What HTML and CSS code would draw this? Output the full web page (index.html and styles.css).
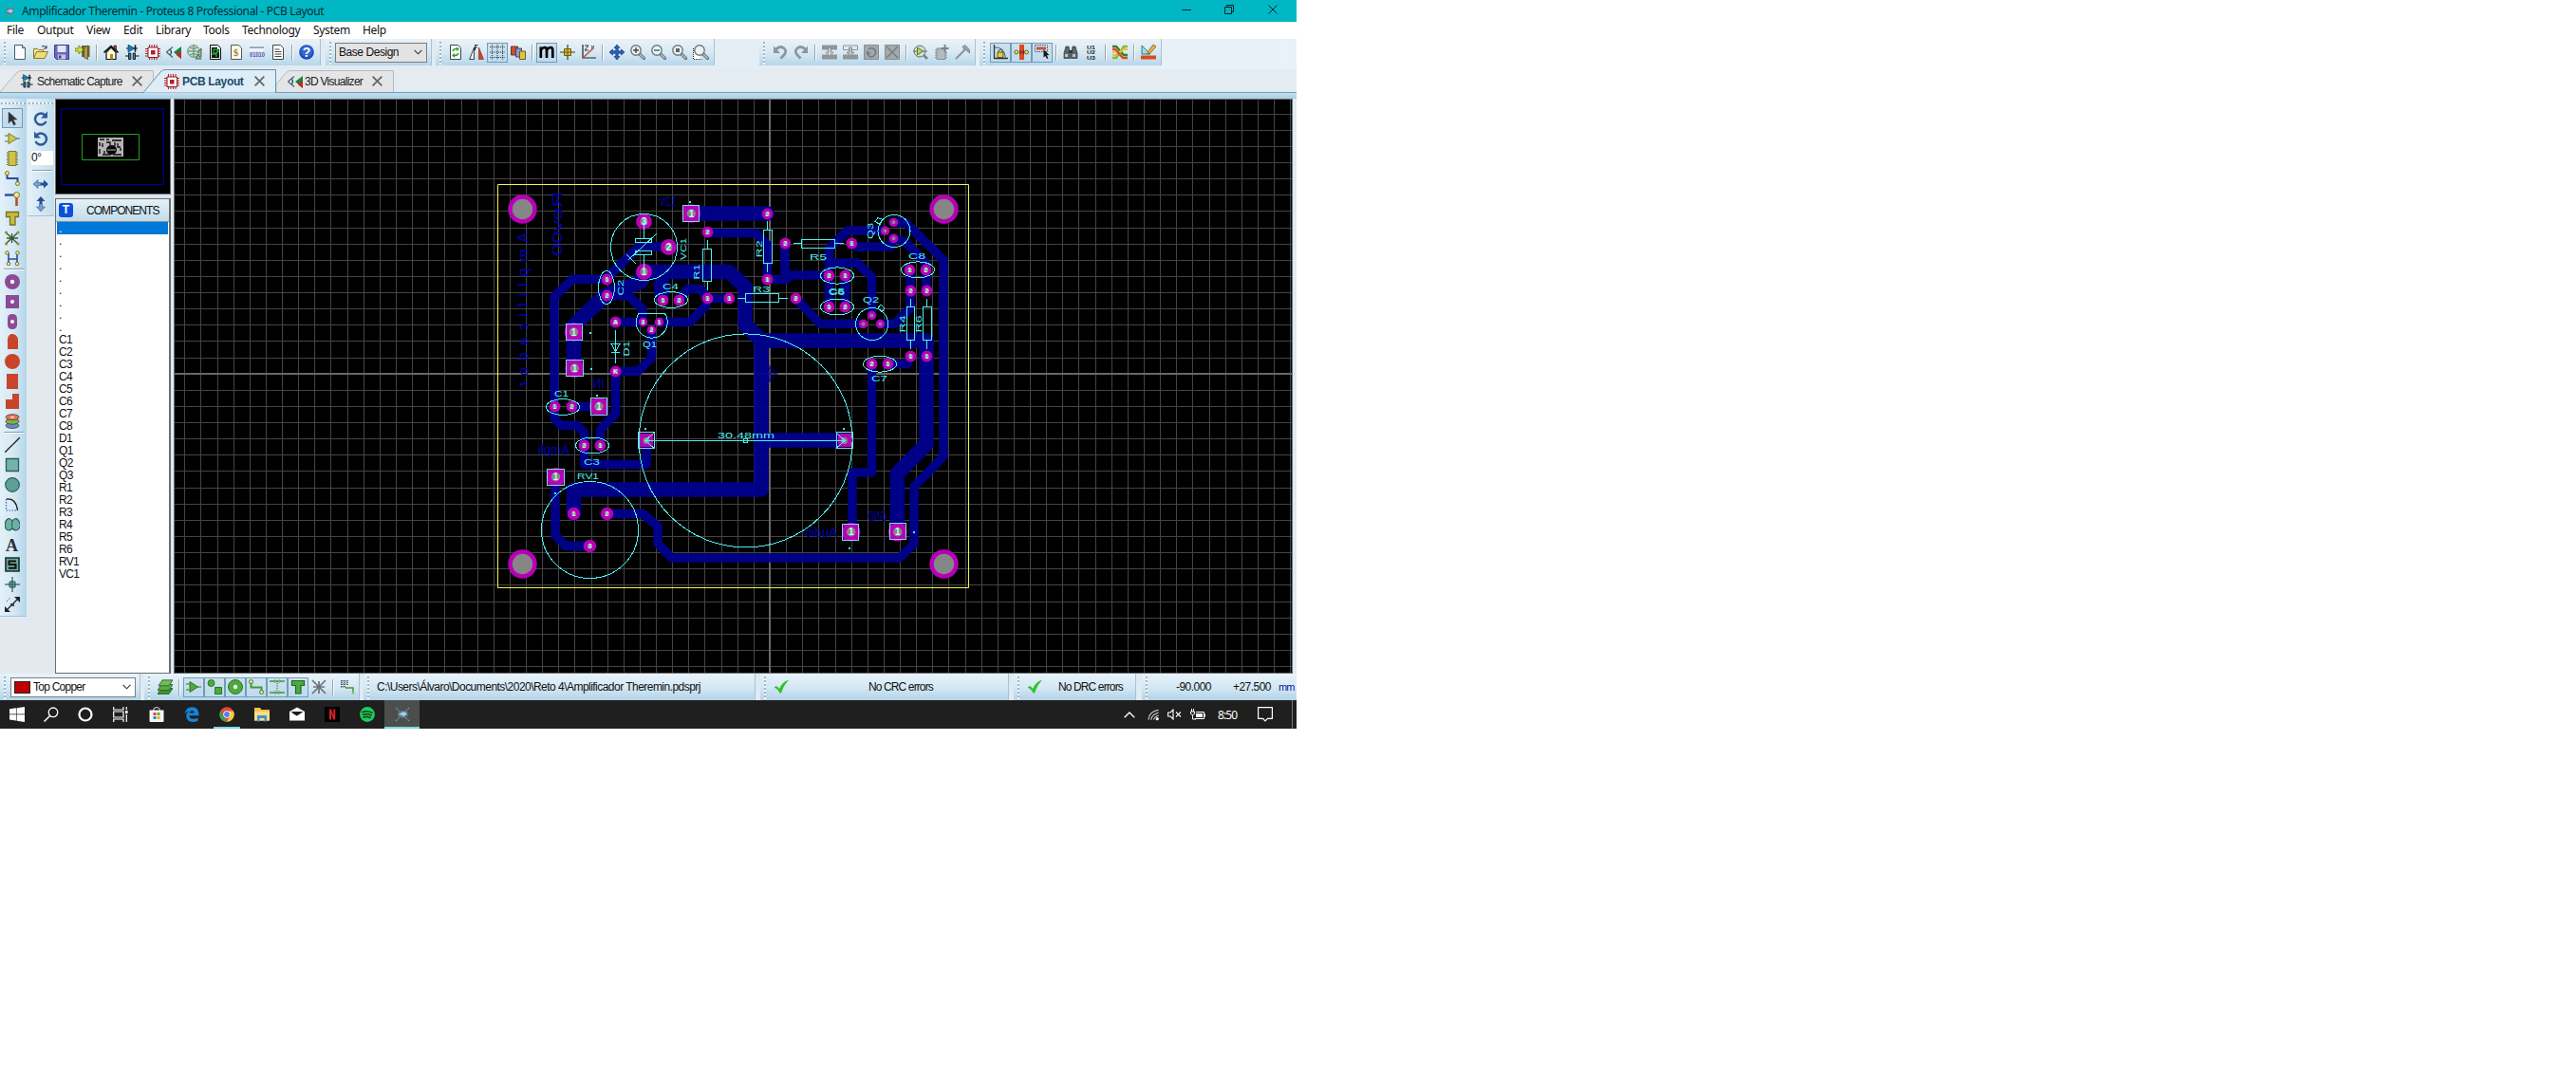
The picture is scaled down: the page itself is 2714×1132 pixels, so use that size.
FILE: index.html
```html
<!DOCTYPE html>
<html lang="en">
<head>
<meta charset="utf-8">
<title>Amplificador Theremin - Proteus 8 Professional - PCB Layout</title>
<link rel="stylesheet" href="styles.css">
</head>
<body>
<svg class="defs" width="0" height="0">
<defs>
<symbol id="proteus" viewBox="0 0 16 16"><path d="M1 1l4 4M15 1l-4 4M1 15l4-4M15 15l-4-4" stroke="#7d8a80" stroke-width="1.4" stroke-dasharray="2 1"/><path d="M4 5l4-1 5 1 1 4-4 3-5-1-2-2z" fill="#4e7f9b"/><path d="M4 8l5-3 4 2-3 3z" fill="#a9cbdc"/></symbol>
<symbol id="new" viewBox="0 0 16 16"><path d="M2.500 .5h8l3 3v12h-11z" fill="#fbfcfd" stroke="#4d5a63"/><path d="M10.500 .5v3h3" fill="#cdd6dd" stroke="#4d5a63"/></symbol>
<symbol id="open" viewBox="0 0 16 16"><path d="M.5 14.500v-10h4l1 1h5v2" fill="#f5e9a0" stroke="#8a7a2c"/><path d="M.5 14.500l3-7h12l-3.500 7z" fill="#f0dc78" stroke="#8a7a2c"/><path d="M9 2q3-2 5 1.500m0-2.500v3h-3" fill="none" stroke="#333"/></symbol>
<symbol id="save" viewBox="0 0 16 16"><path d="M.5.5h15v15h-13l-2-2z" fill="#6c68bd" stroke="#403d85"/><path d="M3.500 1h9v7h-9z" fill="#e3e6f3"/><path d="M4 10.500h8v5H4z" fill="#c5c8d5"/><path d="M5 11.500h2.500v3H5z" fill="#403d85"/></symbol>
<symbol id="door" viewBox="0 0 16 16"><path d="M7 1h8.500v12H7z" fill="#6f6433"/><path d="M9.500 3l4-2v14.500l-4-2z" fill="#a89a55" stroke="#4c4420" stroke-width=".7"/><path d="M0 4h4V1l5 4.500-5 4.500V7H0z" fill="#d2e036" stroke="#6d7820" stroke-width=".8"/></symbol>
<symbol id="home" viewBox="0 0 16 16"><path d="M11 1h2.500v5L11 4z" fill="#b04020" stroke="#111" stroke-width=".6"/><path d="M3 8v7.500h10V8L8 3z" fill="#fffbd8" stroke="#111" stroke-width="1.200"/><path d="M.5 8.500L8 1.500l7.500 7" fill="none" stroke="#111" stroke-width="1.600"/><path d="M7 10h3v5.500H7z" fill="#b8862b"/></symbol>
<symbol id="schem" viewBox="0 0 16 16"><path d="M2 4h12M1 12h3.500M11.500 12h4" stroke="#111" stroke-width="1.200"/><path d="M4 0l7 4L4 8z" fill="#1a7cb8" stroke="#0d2f45" stroke-width=".6"/><path d="M11.500 .3v7.500" stroke="#111" stroke-width="1.500"/><path d="M4.500 9h2.300v6.500H4.500zM9.200 9h2.300v6.500H9.200z" fill="#2c86bd" stroke="#111" stroke-width=".9"/></symbol>
<symbol id="chip" viewBox="0 0 16 16"><path d="M4.500 0v16M7 0v16M9.500 0v16M12 0v16M0 4.500h16M0 7h16M0 9.500h16M0 12h16" stroke="#c01824" stroke-width="1"/><path d="M3 3h10.500v10.500H3z" fill="#fff" stroke="#8c1820"/><path d="M6 6h4.500v4.500H6z" fill="#c01824"/></symbol>
<symbol id="view3d" viewBox="0 0 16 16"><path d="M7 2.500L.5 8 7 13.500" fill="none" stroke="#53666f" stroke-width="1.300"/><path d="M4.500 5q2.500 3 0 6" fill="#2b87a8" stroke="#1b4a5c"/><path d="M8 8l8-6v13z" fill="#178338"/><path d="M12.500 8h3.500v7l-5-3.700z" fill="#c32b25"/></symbol>
<symbol id="globe" viewBox="0 0 16 16"><circle cx="7" cy="7" r="6.300" fill="#c9dfd0" stroke="#5c8b6c"/><path d="M1 7h12M7 1v12M3 3q4 3 8 0M3 11q4-3 8 0" fill="none" stroke="#5c8b6c"/><path d="M11 9l4-5v9M9 15l3-5 3 5z" fill="#9bb3a0" stroke="#4b6655"/></symbol>
<symbol id="gerber" viewBox="0 0 16 16"><path d="M2.500 .5h8l3 3v12h-11z" fill="#eee" stroke="#111"/><path d="M4 3h6v2h2v9H4z" fill="#071408"/><path d="M6 5h4v4H6zM4 10h5v3M10 7h2" fill="none" stroke="#28d858"/></symbol>
<symbol id="dollar" viewBox="0 0 16 16"><path d="M2.500 .5h8l3 3v12h-11z" fill="#fbf8e6" stroke="#555"/><text x="5" y="12" class="ic-dollar">$</text></symbol>
<symbol id="bom" viewBox="0 0 16 16"><path d="M0 1h15v6H0z" fill="#eef3f8"/><path d="M0 3h15" stroke="#4e5c9b"/><text x="0" y="12.500" class="ic-bom" textLength="16" lengthAdjust="spacingAndGlyphs">01010</text></symbol>
<symbol id="doc" viewBox="0 0 16 16"><path d="M2.500 .5h8l3 3v12h-11z" fill="#fff" stroke="#444"/><path d="M4.500 5h5M4.500 7.500h7M4.500 10h7M4.500 12.500h7" stroke="#444"/></symbol>
<symbol id="help" viewBox="0 0 16 16"><circle cx="8" cy="8" r="7.800" fill="#1d4fb8"/><circle cx="8" cy="7" r="6" fill="#3269d0"/><text x="3.800" y="13" class="ic-help">?</text></symbol>
<symbol id="refresh" viewBox="0 0 16 16"><path d="M2.500 .5h8l3 3v12h-11z" fill="#fff" stroke="#444"/><path d="M5 7q1-3 5-2.500M11 9q-1 3-5 2.500" fill="none" stroke="#2aa02a" stroke-width="1.600"/><path d="M9 2.500l3 2-3 2.500zM7 9l-3 2.300L7 14z" fill="#2aa02a"/></symbol>
<symbol id="flip" viewBox="0 0 16 16"><path d="M5.500 3v12.500H.7z" fill="#e5ecf1" stroke="#333" stroke-width=".9"/><path d="M10.500 3v12.500h5z" fill="#d0432b" stroke="#7b2315" stroke-width=".6"/><path d="M6.500 6V.5h3M6.500 3h2.500" fill="none" stroke="#222"/></symbol>
<symbol id="grid" viewBox="0 0 16 16"><path d="M0 2.500h16M0 8h16M0 13.500h16M2.500 0v16M8 0v16M13.500 0v16" stroke="#34444e" stroke-width="1.100" stroke-dasharray="1.200 1"/></symbol>
<symbol id="layers3" viewBox="0 0 16 16"><path d="M.5 2h7v9h-7z" fill="#cf4b2b" stroke="#68362c"/><path d="M5.500 4h6v9h-6z" fill="#8c9bd8" stroke="#3a416d"/><path d="M9.500 7h6v8.500h-6z" fill="#e6c53d" stroke="#6c5d1c"/></symbol>
<symbol id="metric" viewBox="0 0 16 16"><path d="M1.800 14V2.500M2 5.500q1.500-2.500 3.800-2.500 2.200 0 2.200 3v8M8.200 5.500q1.500-2.500 3.800-2.500 2.300 0 2.300 3v8" fill="none" stroke="#000" stroke-width="2.700"/></symbol>
<symbol id="origin" viewBox="0 0 16 16"><path d="M8 0v16M0 8h16" stroke="#443f10" stroke-width="1.200"/><path d="M4.500 4.500h7v7h-7z" fill="#d3bd2e" stroke="#6a5e10"/><path d="M8 5v6M5 8h6" stroke="#6a5e10"/></symbol>
<symbol id="polar" viewBox="0 0 16 16"><path d="M2 0v14h14" fill="none" stroke="#222" stroke-width="1.200"/><path d="M2 14L13 4" stroke="#d04030" stroke-width="1.300"/><path d="M4 1h4L4 6h4M11 1l3 3M14 1l-3 3" fill="none" stroke="#333" stroke-width="1"/></symbol>
<symbol id="pan" viewBox="0 0 16 16"><path d="M8 0l3 3.500H9.200v3.300h3.300V5L16 8l-3.500 3V9.200H9.200v3.300H11L8 16l-3-3.500h1.800V9.200H3.500V11L0 8l3.500-3v1.800h3.300V3.500H5z" fill="#2763b7" stroke="#143a78" stroke-width=".7"/></symbol>
<symbol id="mag" viewBox="0 0 16 16"><path d="M10 10l4.500 4.500" stroke="#6b7379" stroke-width="3.200" stroke-linecap="round"/><path d="M10 10l4.500 4.500" stroke="#c0c6ca" stroke-width="1.300"/><circle cx="6" cy="6" r="5.200" fill="#eef4f6" stroke="#6f777c" stroke-width="1.400"/></symbol>
<symbol id="undo" viewBox="0 0 16 16"><path d="M3.500 5q4-4 8-1.500 4.500 3.500 0 8l-3 3" fill="none" stroke="#8d969c" stroke-width="2.800"/><path d="M1 1.500v7.500h7z" fill="#8d969c"/></symbol>
<symbol id="block" viewBox="0 0 16 16"><path d="M0 .5h16v5H0zM0 10.500h16v5H0z" fill="#8f9599"/><path d="M6.500 3h3v5H12l-4 4.500L4 8h2.500z" fill="#c8ccce" stroke="#777" stroke-width=".7"/></symbol>
<symbol id="block2" viewBox="0 0 16 16"><path d="M.5 1h15v4.500H.5z" fill="#e3e9ed" stroke="#8f9599"/><path d="M0 10.500h16v5H0z" fill="#8f9599"/><path d="M6.500 3h3v5H12l-4 4.500L4 8h2.500z" fill="#b7bdc1" stroke="#777" stroke-width=".7"/></symbol>
<symbol id="rotblk" viewBox="0 0 16 16"><path d="M.5.5h15v15H.5z" fill="#a3a8ab" stroke="#888e92"/><path d="M5 5a4.500 4.500 0 1 1-1 5" fill="none" stroke="#72797e" stroke-width="1.500"/><path d="M3 6v4h5z" fill="#72797e"/></symbol>
<symbol id="delblk" viewBox="0 0 16 16"><path d="M.5.5h15v15H.5z" fill="#a3a8ab" stroke="#888e92"/><path d="M2 2l12 12M14 2L2 14" stroke="#727b80" stroke-width="1.300"/></symbol>
<symbol id="pick" viewBox="0 0 16 16"><path d="M10 10l5 5" stroke="#7a858a" stroke-width="2.600"/><circle cx="7" cy="7" r="6" fill="#d5e0d8" stroke="#62716a"/><path d="M4.500 3l6 4-6 4z" fill="#b9d34e" stroke="#63752a"/><path d="M0 7h4M10 7h5" stroke="#62716a"/></symbol>
<symbol id="make" viewBox="0 0 16 16"><path d="M3 4h9v11.500H3z" fill="#b5babd" stroke="#868d91"/><path d="M1 6h2M1 8.500h2M1 11h2M1 13.500h2M12 8.500h2M12 11h2M12 13.500h2" stroke="#868d91"/><path d="M11.500 0v8M7.500 4h8" stroke="#7b8387" stroke-width="2"/></symbol>
<symbol id="hammer" viewBox="0 0 16 16"><path d="M1 15L11 5" stroke="#8b9398" stroke-width="2"/><path d="M8 2l3-1.500 4.500 5V9L13 7l-1-2-2 .5z" fill="#9ba3a7" stroke="#6f787d" stroke-width=".7"/></symbol>
<symbol id="anglelock" viewBox="0 0 16 16"><path d="M1.500 0v14.500H16" fill="none" stroke="#333" stroke-width="1.300"/><path d="M2 3q10-1 11.500 11" fill="none" stroke="#558"/><path d="M5 8h6v5.500H5z" fill="#e2cf3e" stroke="#5c5518"/><path d="M6 8V6q2-2 4 0v2" fill="none" stroke="#5c5518"/></symbol>
<symbol id="autoneck" viewBox="0 0 16 16"><path d="M6 0h5v16H6z" fill="#d94a22"/><path d="M6 5l2.500 3L6 11M11 5L8.500 8l2.500 3" fill="#7f2a16"/><circle cx="2.800" cy="8" r="2" fill="#e6de62" stroke="#6b6518"/><circle cx="13.500" cy="8" r="2" fill="#e6de62" stroke="#6b6518"/></symbol>
<symbol id="selfilt" viewBox="0 0 16 16"><path d="M.5.5h13v7H.5z" fill="none" stroke="#555" stroke-dasharray="1.500 1"/><path d="M2 2.500h10v3H2z" fill="#c05548"/><path d="M9.500 5l6 6-2.600.2 1.500 3.300-1.400.6-1.500-3.200-2 1.700z" fill="#171717"/></symbol>
<symbol id="binoc" viewBox="0 0 16 16"><path d="M3 2h3l1.500 8v4.500h-6.500V9zM13 2h-3L8.500 10v4.500H15V9z" fill="#5b656b" stroke="#30383c" stroke-width=".7"/><path d="M6 6h4v3H6z" fill="#30383c"/><path d="M2 10h3v3H2zM10 10h3v3h-3z" fill="#b9c3c8"/></symbol>
<symbol id="annot" viewBox="0 0 16 16"><text x="3" y="4.800" class="ic-u" textLength="9" lengthAdjust="spacingAndGlyphs">U1</text><text x="3" y="10.400" class="ic-u" textLength="9" lengthAdjust="spacingAndGlyphs">U2</text><text x="3" y="16" class="ic-u" textLength="9" lengthAdjust="spacingAndGlyphs">U3</text></symbol>
<symbol id="router" viewBox="0 0 16 16"><path d="M0 2h4l8 9h4" fill="none" stroke="#3e7d22" stroke-width="2.400"/><path d="M0 14h4L12 2h4" fill="none" stroke="#86bb34" stroke-width="2.400"/><path d="M0 11h3l9-6h4M0 8h3" fill="none" stroke="#ddc832" stroke-width="1.800"/><path d="M0 5h3l8 9h5" fill="none" stroke="#d84c22" stroke-width="2.400"/></symbol>
<symbol id="drc" viewBox="0 0 16 16"><path d="M1 1v9h9z" fill="#a7dbe0" stroke="#2b7b86"/><path d="M7 8l6-8 3 2-6 7-3 1z" fill="#e0b942" stroke="#7b3a1c" stroke-width=".7"/><path d="M0 11.500h16v4H0z" fill="#d84c20"/></symbol>
<symbol id="ptr" viewBox="0 0 16 16"><path d="M4 1v12l3-3 2.500 5 2-1L9 9h4z" fill="#2b3135" stroke="#454d52" stroke-width=".5"/></symbol>
<symbol id="opamp" viewBox="0 0 16 16"><path d="M0 5h4M0 11h4M13 8h3" stroke="#5c6a26" stroke-width="1"/><path d="M4 2.500L13 8l-9 5.500z" fill="#cfc748" stroke="#807a22"/></symbol>
<symbol id="ic" viewBox="0 0 16 16"><path d="M2 2h12M2 4.500h12M2 7h12M2 9.500h12M2 12h12M2 14.500h12" stroke="#77762e"/><path d="M4 .5h8v15H4z" fill="#cdc24e" stroke="#827b25"/></symbol>
<symbol id="trk" viewBox="0 0 16 16"><path d="M2.500 4v4h11v5" fill="none" stroke="#2c4ca0" stroke-width="2"/><circle cx="2.500" cy="2.500" r="2" fill="#f0ea8a" stroke="#77722a"/><circle cx="13.500" cy="13.500" r="2" fill="#f0ea8a" stroke="#77722a"/></symbol>
<symbol id="via" viewBox="0 0 16 16"><path d="M0 4.500h11" stroke="#2c4ca0" stroke-width="2.400"/><path d="M12.500 5v11" stroke="#c2442c" stroke-width="2.600"/><circle cx="12.500" cy="4.500" r="3" fill="#f0ea8a" stroke="#77722a"/></symbol>
<symbol id="zone" viewBox="0 0 16 16"><path d="M1.500 1.500h13v5h-3.500v8.500h-5.500V6.500h-4z" fill="#c5bd3d" stroke="#77722a" stroke-width="1.300"/></symbol>
<symbol id="rats" viewBox="0 0 16 16"><path d="M1 2l13 12M14 2L1 14M7.500 3v10M2 8h12" stroke="#3b5a2c" stroke-width="1.400"/><path d="M1.500 2h.1M14 2h.1M1.500 14h.1M14 14h.1" stroke="#8c9440" stroke-width="3" stroke-linecap="round"/></symbol>
<symbol id="hilite" viewBox="0 0 16 16"><path d="M4 2v7h9V3M4 8v6M13 8v6" fill="none" stroke="#2c4ca0" stroke-width="1.600"/><g fill="#f0ea8a" stroke="#77722a"><circle cx="2.500" cy="2.500" r="1.800"/><circle cx="13.500" cy="2.500" r="1.800"/><circle cx="4" cy="14" r="1.800"/><circle cx="13" cy="14" r="1.800"/></g></symbol>
<symbol id="padc" viewBox="0 0 16 16"><circle cx="8" cy="8" r="8" fill="#8d4a97"/><circle cx="8" cy="8" r="2.200" fill="#fff"/></symbol>
<symbol id="pads" viewBox="0 0 16 16"><path d="M1 1h14v14H1z" fill="#8d4a97"/><circle cx="8" cy="8" r="2" fill="#fff"/></symbol>
<symbol id="padd" viewBox="0 0 16 16"><rect x="3" width="10" height="16" rx="4.500" fill="#8d4a97"/><circle cx="8" cy="8" r="2" fill="#fff"/></symbol>
<symbol id="pade" viewBox="0 0 16 16"><path d="M3 16V5q1-5 5-5t6 5v11z" fill="#c8452a"/></symbol>
<symbol id="padsc" viewBox="0 0 16 16"><circle cx="8" cy="8" r="8" fill="#c8452a"/></symbol>
<symbol id="padsr" viewBox="0 0 16 16"><path d="M2 0h12v16H2z" fill="#c8452a"/></symbol>
<symbol id="padp" viewBox="0 0 16 16"><path d="M1 6h7V0h7v16H1z" fill="#c8452a"/></symbol>
<symbol id="stack" viewBox="0 0 16 16"><g stroke="#444" stroke-width=".8"><ellipse cx="8" cy="12.500" rx="7" ry="3" fill="#6c86c8"/><ellipse cx="8" cy="8.200" rx="7" ry="3" fill="#78b840"/><ellipse cx="8" cy="3.700" rx="7" ry="3" fill="#ec7150"/></g><ellipse cx="8" cy="3.700" rx="2" ry=".8" fill="#fff"/></symbol>
<symbol id="line" viewBox="0 0 16 16"><path d="M0 16L16 0" stroke="#222" stroke-width="1.300"/></symbol>
<symbol id="box" viewBox="0 0 16 16"><path d="M1.500 1.500h13v13h-13z" fill="#74b3a9" stroke="#2c5f59" stroke-width="1.300"/></symbol>
<symbol id="circ" viewBox="0 0 16 16"><circle cx="8" cy="8" r="7.300" fill="#5ea096" stroke="#2c5f59" stroke-width="1.200"/></symbol>
<symbol id="arc" viewBox="0 0 16 16"><path d="M1.500 2v12h12" fill="none" stroke="#2a66b4" stroke-width="1.200" stroke-dasharray="1.500 1.500"/><path d="M2 2q10-1 11.500 12" fill="none" stroke="#222" stroke-width="1.300"/></symbol>
<symbol id="path" viewBox="0 0 16 16"><path d="M8 4Q5 0 2 3T1 12q3 4 7 0 4 4 7 0t-1-9Q11 0 8 4z" fill="#6fb0a5" stroke="#2c5f59" stroke-width="1.200"/><path d="M8 4q-1 4 0 8" fill="none" stroke="#2c5f59"/></symbol>
<symbol id="txt" viewBox="0 0 16 16"><text x="1" y="14.500" class="ic-a">A</text></symbol>
<symbol id="sym" viewBox="0 0 16 16"><path d="M1 1h14v14H1z" fill="#69a79e" stroke="#16302d" stroke-width="1.600"/><path d="M12 4.500H4.500V8h7v3.700H4" fill="none" stroke="#111" stroke-width="2"/></symbol>
<symbol id="mark" viewBox="0 0 16 16"><path d="M8 0v16M0 8h16" stroke="#234"/><path d="M5 5h6v6H5z" fill="#63a79c" stroke="#2c5f59"/><path d="M8 4v8M4 8h8" stroke="#2c5f59"/></symbol>
<symbol id="dim" viewBox="0 0 16 16"><path d="M1 15L15 1" stroke="#222" stroke-width="1.300"/><path d="M0 16v-6l6 6zM16 0v6l-6-6z" fill="#222"/><path d="M2 5l4-4" stroke="#444" stroke-dasharray="1 1.500"/><path d="M6 7h4v3H6z" fill="#39454c"/></symbol>
<symbol id="rot" viewBox="0 0 16 16"><path d="M12.500 4.500A6 6 0 1 0 13.500 11" fill="none" stroke="#2f5b98" stroke-width="2.500"/><path d="M15 .5v7H8z" fill="#2f5b98"/></symbol>
<symbol id="mir" viewBox="0 0 16 16"><path d="M0 8l5-4.500v3h3v3H5v3z" fill="#7c9ccb" stroke="#4468a4" stroke-width=".7"/><path d="M16 8l-5-4.500v3H8v3h3v3z" fill="#244f96"/></symbol>
<symbol id="glayers" viewBox="0 0 16 16"><g stroke="#1f5c20" stroke-width=".8"><path d="M4 9.500h12l-4 6H0z" fill="#3e8f34"/><path d="M4 5.500h12l-4 6H0z" fill="#5cab48"/><path d="M5 .8h11l-4 6H1z" fill="#6fbd56"/></g></symbol>
<symbol id="gamp" viewBox="0 0 16 16"><path d="M0 5h4M0 11h4M12 8h4" stroke="#287828" stroke-width="1"/><path d="M4 2.500L12.500 8 4 13.500z" fill="#4caa3c" stroke="#287828"/></symbol>
<symbol id="gpads" viewBox="0 0 16 16"><circle cx="4.500" cy="4" r="3.500" fill="#4caa3c" stroke="#287828"/><path d="M8.500 8.500h7v7h-7z" fill="#4caa3c" stroke="#287828"/></symbol>
<symbol id="gvia" viewBox="0 0 16 16"><circle cx="8" cy="8" r="7.500" fill="#4caa3c" stroke="#287828"/><circle cx="8" cy="8" r="2.300" fill="#dff0dc"/></symbol>
<symbol id="gtrk" viewBox="0 0 16 16"><path d="M2.500 4v4.500h11V13" fill="none" stroke="#3e9c34" stroke-width="2"/><circle cx="2.500" cy="2.500" r="2" fill="#e5eb9a" stroke="#3b7d2d"/><circle cx="13.500" cy="13.500" r="2" fill="#e5eb9a" stroke="#3b7d2d"/></symbol>
<symbol id="gdim" viewBox="0 0 16 16"><path d="M0 2h16M0 14h16" stroke="#3e9c34" stroke-width="1.500"/><path d="M8 4v8" stroke="#444" stroke-dasharray="1.200 1.200"/><path d="M5 1h2v2H5zM9 1h2v2H9zM5 13h2v2H5zM9 13h2v2H9z" fill="#aedba0" stroke="#3b7d2d" stroke-width=".6"/></symbol>
<symbol id="gzone" viewBox="0 0 16 16"><path d="M1.500 1.500h13v5h-3.500v8.500h-5.500V6.500h-4z" fill="#4caa3c" stroke="#1f6a20" stroke-width="1.200"/></symbol>
<symbol id="grats" viewBox="0 0 16 16"><path d="M1 1l14 14M15 1L1 15M8 2v13M2 8h12" stroke="#6a7378" stroke-width="1.700"/></symbol>
<symbol id="gsel" viewBox="0 0 16 16"><path d="M2 1v8M5 1v8M8 1v6M1 2h8M1 5h8M1 8h6" stroke="#223" stroke-width="1.100" stroke-dasharray="1 1"/><path d="M6 9h8v5" fill="none" stroke="#3e9c34" stroke-width="1.500"/><circle cx="14" cy="14" r="1.500" fill="#7cc86c"/></symbol>
<symbol id="tick" viewBox="0 0 16 16"><path d="M1 8q3-2 5 2Q9 3 15 1q1-.3 0 1Q11 6 8.500 13.500q-.5 1.500-2 1Q4 9.500 1 9z" fill="#2fc42c"/></symbol>
<symbol id="x" viewBox="0 0 12 12"><path d="M.7.7l10.600 10.600M11.300.7L.7 11.300" stroke="currentColor" stroke-width="2"/></symbol>
<symbol id="chev" viewBox="0 0 10 6"><path d="M.7.7L5 5 9.300.7" fill="none" stroke="currentColor" stroke-width="1.200"/></symbol>
</defs>
</svg>

<div class="app">
  <header class="title">
    <svg class="i14"><use href="#proteus"/></svg>
    <span class="title-text">Amplificador Theremin - Proteus 8 Professional - PCB Layout</span>
    <svg class="wc" viewBox="0 0 46 23"><path d="M17 10.500h10" stroke="#06242a"/></svg>
    <svg class="wc" viewBox="0 0 46 23"><path d="M16.500 7.500h7v7h-7zM18.500 7.500v-2h7v7h-2" fill="none" stroke="#06242a"/></svg>
    <svg class="wc" viewBox="0 0 46 23"><path d="M16.500 5.500l9 9M25.500 5.500l-9 9" stroke="#06242a"/></svg>
  </header>
  <nav class="menu"><span class="m1">File</span><span class="m2">Output</span><span class="m3">View</span><span class="m4">Edit</span><span class="m5">Library</span><span class="m6">Tools</span><span class="m7">Technology</span><span class="m8">System</span><span class="m9">Help</span></nav>

  <div class="bars">
    <div class="bar b1"><b><svg><use href="#new"/></svg></b><b><svg><use href="#open"/></svg></b><b><svg><use href="#save"/></svg></b><b><svg><use href="#door"/></svg></b><i></i><b><svg><use href="#home"/></svg></b><b><svg><use href="#schem"/></svg></b><b><svg><use href="#chip"/></svg></b><b><svg><use href="#view3d"/></svg></b><b><svg><use href="#globe"/></svg></b><b><svg><use href="#gerber"/></svg></b><b><svg><use href="#dollar"/></svg></b><b><svg><use href="#bom"/></svg></b><b><svg><use href="#doc"/></svg></b><i></i><b><svg><use href="#help"/></svg></b></div>
    <div class="bar b2"><div class="combo design"><span>Base Design</span><svg class="chev"><use href="#chev"/></svg></div></div>
    <div class="bar b3"><b><svg><use href="#refresh"/></svg></b><b><svg><use href="#flip"/></svg></b><b class="on"><svg><use href="#grid"/></svg></b><b><svg><use href="#layers3"/></svg></b><i></i><b class="on"><svg><use href="#metric"/></svg></b><b><svg><use href="#origin"/></svg></b><b><svg><use href="#polar"/></svg></b><i></i><b><svg><use href="#pan"/></svg></b><b><svg viewBox="0 0 16 16"><use href="#mag"/><path d="M3 6h6M6 3v6" stroke="#444" stroke-width="1.400"/></svg></b><b><svg viewBox="0 0 16 16"><use href="#mag"/><path d="M3 6h6" stroke="#377" stroke-width="1.500"/></svg></b><b><svg viewBox="0 0 16 16"><use href="#mag"/><path d="M4 4h4v4H4z" fill="#666"/></svg></b><b><svg viewBox="0 0 16 16"><path d="M.5 4v11.500h9" fill="#fff" stroke="#222" stroke-dasharray="1 1"/><use href="#mag" x="1"/></svg></b></div>
    <div class="bar b4"><b><svg><use href="#undo"/></svg></b><b><svg class="fliph"><use href="#undo"/></svg></b><i></i><b><svg><use href="#block"/></svg></b><b><svg><use href="#block2"/></svg></b><b><svg><use href="#rotblk"/></svg></b><b><svg><use href="#delblk"/></svg></b><i></i><b><svg><use href="#pick"/></svg></b><b><svg><use href="#make"/></svg></b><b><svg><use href="#hammer"/></svg></b></div>
    <div class="bar b5"><b class="on"><svg><use href="#anglelock"/></svg></b><b class="on"><svg><use href="#autoneck"/></svg></b><b class="on"><svg><use href="#selfilt"/></svg></b><i></i><b><svg><use href="#binoc"/></svg></b><b><svg><use href="#annot"/></svg></b><i></i><b><svg><use href="#router"/></svg></b><i></i><b><svg><use href="#drc"/></svg></b></div>
  </div>

  <div class="tabs">
    <div class="tab t1"><svg class="shape" viewBox="0 0 162 25"><path d="M0 24L18 3Q20 1.500 23 1.500H161.500V24" fill="#e3e5e7" stroke="#b5bcc2"/></svg><svg class="i14b"><use href="#schem"/></svg><span>Schematic Capture</span><svg class="cx"><use href="#x"/></svg></div>
    <div class="tab t3"><svg class="shape" viewBox="0 0 124 25"><path d="M0 24V16L10 4Q12 1.500 15 1.500H123.500V24" fill="#e3e5e7" stroke="#b5bcc2"/></svg><svg class="i16"><use href="#view3d"/></svg><span>3D Visualizer</span><svg class="cx"><use href="#x"/></svg></div>
    <div class="tab t2"><svg class="shape" viewBox="0 0 140 25"><path d="M0 24.500L18 3Q20 .5 23 .5H139.500V24.500" fill="#deedf6" stroke="#5f92b5"/></svg><svg class="i16"><use href="#chip"/></svg><span>PCB Layout</span><svg class="cx"><use href="#x"/></svg></div>
  </div>

  <main class="work">
    <aside class="modes">
      <b class="on"><svg><use href="#ptr"/></svg></b><b><svg><use href="#opamp"/></svg></b><b><svg><use href="#ic"/></svg></b><b><svg><use href="#trk"/></svg></b><b><svg><use href="#via"/></svg></b><b><svg><use href="#zone"/></svg></b><b><svg><use href="#rats"/></svg></b><b><svg><use href="#hilite"/></svg></b><i></i><b><svg><use href="#padc"/></svg></b><b><svg><use href="#pads"/></svg></b><b><svg><use href="#padd"/></svg></b><b><svg><use href="#pade"/></svg></b><b><svg><use href="#padsc"/></svg></b><b><svg><use href="#padsr"/></svg></b><b><svg><use href="#padp"/></svg></b><b><svg><use href="#stack"/></svg></b><i></i><b><svg><use href="#line"/></svg></b><b><svg><use href="#box"/></svg></b><b><svg><use href="#circ"/></svg></b><b><svg><use href="#arc"/></svg></b><b><svg><use href="#path"/></svg></b><b><svg><use href="#txt"/></svg></b><b><svg><use href="#sym"/></svg></b><b><svg><use href="#mark"/></svg></b><b><svg><use href="#dim"/></svg></b>
    </aside>
    <aside class="orient">
      <b><svg><use href="#rot"/></svg></b><b><svg class="fliph"><use href="#rot"/></svg></b><span class="angle">0°</span><i></i><b><svg><use href="#mir"/></svg></b><b><svg class="turn"><use href="#mir"/></svg></b>
    </aside>
    <section class="side">
      <svg class="overview" viewBox="59 105 120 99"><path d="M64.500 114.500h108v80h-108z" fill="none" stroke="#0000a0"/><path d="M86.500 141.500h60v27h-60z" fill="none" stroke="#22a11f"/><path d="M103 145h27v20h-27z" fill="#b5b5b5"/><path d="M105 147h5M112 147h3M118 148h10M105 150v4M108 151v4M112 150h4v3M124 151v4h3M121 150v4M105 157v5M108 163h9M119 163h9M110 159v3M127 156v3" fill="none" stroke="#080808" stroke-width="1.300"/><ellipse cx="117.500" cy="158" rx="5.500" ry="5" fill="#080808"/><path d="M113 158h9" stroke="#b5b5b5"/></svg>
      <div class="selector">
        <div class="sel-head"><span class="tbadge">T</span><span class="sel-title">COMPONENTS</span></div>
        <ul><li class="sel">.</li><li>.</li><li>.</li><li>.</li><li>.</li><li>.</li><li>.</li><li>.</li><li>.</li><li>C1</li><li>C2</li><li>C3</li><li>C4</li><li>C5</li><li>C6</li><li>C7</li><li>C8</li><li>D1</li><li>Q1</li><li>Q2</li><li>Q3</li><li>R1</li><li>R2</li><li>R3</li><li>R4</li><li>R5</li><li>R6</li><li>RV1</li><li>VC1</li></ul>
      </div>
    </section>
    <section class="canvas">
      <svg viewBox="184 105 1177 604" width="1177" height="604">
        <defs>
          <g id="q"><circle r="9.800"/><path d="M-8-8H8V8H-8z"/></g>
          <path id="holes" d="M639.500 294.500h0M639.500 311.500h0M698.500 316.500h0M715.500 316.500h0M745.500 244.700h0M745.500 314.500h0M768.300 314.500h0M838.500 314.500h0M648.500 339.500h0M648.500 391.500h0M808.500 225.500h0M808.500 294.500h0M827.300 256.500h0M897.300 256.500h0M873.500 290.500h0M890.500 290.500h0M873.500 323.500h0M890.500 323.500h0M958.500 284.500h0M975.500 284.500h0M959.500 306.500h0M959.500 375.500h0M976.500 306.500h0M976.500 375.500h0M918.500 383.500h0M935.500 383.500h0M584.500 428.500h0M602.500 428.500h0M615.500 469.500h0M632.500 469.500h0"/>
          <path id="small" d="M677.500 339.500h0M694.500 339.500h0M686.500 347.700h0M941.500 234.300h0M932.500 243.300h0M941.500 251.300h0M918.500 332.500h0M909.500 341.500h0M927.500 341.500h0"/>
          <path id="rv" d="M604.500 541.500h0M639.500 541.500h0M621.500 575.500h0"/>
        </defs>
        <rect x="184" y="105" width="1177" height="604" fill="#000"/>
        <g class="grid-lines">
          <path d="M177.200 407H1361" stroke-width="604" stroke-dasharray="1 16.130"/>
          <path d="M772.500 102.500V709" stroke-width="1177" stroke-dasharray="1 16.130"/>
        </g>
        <path d="M810 105h2v604h-2zM184 393h1177v2H184z" fill="#686868"/>
        <g class="thin">
          <path d="M745 245.500H796L808.500 258V294.500H829M827 256V290H873M704 260H673L640 292M639.500 294.300H603L584 313V441L591 448.500H608L615.500 456V489.500H681V464M639.500 311.500H662L677 326V339.500H648M715.500 316.500L724 304.500H738L745.500 314.500H768M745.500 314.500L744 322 727 339.500H694M686.500 347V377L672 391.500H648.500V436L632.500 453V469M602.500 428.500H631M585 503V564L596 575.500H621M639.500 541.500H677L693 554.500V573L707.500 588H948L963 573V513L994 481V274L954 234.500H941M932 243H893L873.500 262V323.500M897 256.500L900 260H938L941 251L954 255 976 278V306M873 277H903L918.500 292V332M890.500 290V323M838.500 314.500L864 341.300H909M927 341.300H943L959 325V284M935 383.500H956L959 376M918.500 383V498H898V560"/>
        </g>
        <g class="thick"><path d="M728 225H808M678 286.500H768L785 302V342L802 359V516H604.500V541M802 359H976V468L945.500 499V560M802 464H889M604.500 388V343L637 312 675 297 678 286M697 288V310"/></g>
        <g class="bottom-text">
          <text transform="translate(713 217) scale(-1 1)" textLength="18" lengthAdjust="spacingAndGlyphs" class="bt">12v</text>
          <text transform="matrix(0 1 1 0 591.500 202)" textLength="68" lengthAdjust="spacingAndGlyphs" class="bt">Rev00</text>
          <text transform="matrix(0 1 1 0 557 245)" textLength="163" class="bt wide">Amplificador</text>
          <text transform="translate(637 409) scale(-1 1)" textLength="13" lengthAdjust="spacingAndGlyphs" class="bt">IN</text>
          <text transform="translate(600 479) scale(-1 1)" textLength="33" lengthAdjust="spacingAndGlyphs" class="bt">Ampli</text>
          <text transform="translate(934 549) scale(-1 1)" textLength="20" lengthAdjust="spacingAndGlyphs" class="bt">GND</text>
          <text transform="translate(882 566) scale(-1 1)" textLength="34" lengthAdjust="spacingAndGlyphs" class="bt">Audio</text>
          <circle cx="811" cy="394" r="6"/><path d="M802 394h18M811 385v18"/>
        </g>
        <g class="dots-mag"><use href="#holes" stroke-width="11.800"/><use href="#small" stroke-width="9.500"/><use href="#rv" stroke-width="13.500"/><path stroke-width="16.800" d="M678.500 233.500h0M704.500 260.500h0M678.500 286.500h0"/></g>
        <g class="dots-gray"><use href="#holes" stroke-width="5"/><use href="#small" stroke-width="4"/><use href="#rv" stroke-width="5"/><path stroke-width="8" d="M678.500 233.500h0M704.500 260.500h0M678.500 286.500h0"/></g>
        <g fill="#b700b7"><use href="#q" x="728.300" y="225"/><use href="#q" x="604.500" y="350"/><use href="#q" x="605.300" y="388.300"/><use href="#q" x="631" y="428.500"/><use href="#q" x="585.500" y="502.700"/><use href="#q" x="896.700" y="560.700"/><use href="#q" x="945.700" y="560.700"/><path d="M674 457h14v14h-14zM883 457h14v14h-14z"/></g>
        <path class="dots-gray" stroke-width="9.500" d="M728.300 225h0M604.500 350h0M605.300 388.300h0M631 428.500h0M585.500 502.700h0M896.700 560.700h0M945.700 560.700h0"/>
        <path class="dots-gray" stroke-width="7" d="M681 464.500h0M889.500 464.500h0"/>
        <g fill="#868686" stroke="#b700b7" stroke-width="4.500"><circle cx="550.500" cy="220.500" r="13"/><circle cx="994.500" cy="220.500" r="13"/><circle cx="550.500" cy="594.500" r="13"/><circle cx="994.500" cy="594.500" r="13"/></g>
        <path d="M524.500 194.500h496v425h-496z" fill="none" stroke="#f4f452"/>
        <g class="silk">
          <path class="sq" d="M719.500 216.500h17v17h-17zM596.500 341.500h17v17h-17zM596.500 379.500h18v17h-18zM622.500 419.500h17v18h-17zM576.500 494.500h18v17h-18zM887.500 552.500h17v17h-17zM937.500 551.500h17v17h-17zM672.500 455.500h17v17h-17zM881.500 455.500h17v17h-17z"/>
          <circle cx="785.600" cy="464.400" r="112.500"/><circle cx="621.500" cy="558.500" r="51"/><circle cx="678.500" cy="260.500" r="35"/><circle cx="942" cy="243.500" r="17"/><circle cx="918.700" cy="341.500" r="17"/>
          <path d="M673 330.500h27.500A16.500 16.500 0 1 1 673 330.500z"/>
          <path d="M925 229.500l5 2-3 5-5-3zM928 321l4 4-3 4-4-4z"/>
          <ellipse cx="639" cy="303" rx="8.500" ry="17.500"/><ellipse cx="707" cy="316" rx="17.500" ry="8.500"/><ellipse cx="882" cy="290.500" rx="17.500" ry="8.700"/><ellipse cx="882" cy="323.500" rx="17.500" ry="8.500"/><ellipse cx="967" cy="284.300" rx="17.500" ry="8.500"/><ellipse cx="927" cy="383.700" rx="17.500" ry="8.500"/><ellipse cx="593" cy="429" rx="17.500" ry="8.500"/><ellipse cx="624" cy="469.500" rx="17.500" ry="8.500"/>
          <path d="M740.500 262.500h9v34h-9zM745.500 253v9M745.500 297v9M804.500 242.500h9v35h-9zM808.500 233v9M808.500 278v9M844.500 252.500h35v9h-35zM836 256.500h8M880 256.500h9M785.500 309.500h35v9h-35zM777 314.500h8M821 314.500h9M955.500 323.500h8v35h-8zM959.500 315v8M959.500 359v9M972.500 323.500h9v35h-9zM976.500 315v8M976.500 359v9M648.500 348v35M644 362.500h9l-4.500 8zM644 371.500h9M678.500 233v18M669.500 251.500h17v4h-17zM669.500 264.500h17v4h-17zM678.500 268.500v20M662 274l30-28M660 268l10 10"/>
          <path d="M681 464.500h208"/><path d="M689 456l-9 8.500 9 8M881 456l9 8.500-9 8"/><circle cx="785.500" cy="464.500" r="2.300"/>
          <path class="dot" d="M726 213h2M621 351h2M622 389h2M628 417h2M584 520h2M679 452h2M888 452h2M894 578h2M962 561h2"/>
        </g>
        <g class="ref">
          <text transform="translate(723 274) rotate(-90)" textLength="23" lengthAdjust="spacingAndGlyphs">VC1</text><text transform="translate(657 311.500) rotate(-90)" textLength="17" lengthAdjust="spacingAndGlyphs">C2</text><text x="698" y="305" textLength="17" lengthAdjust="spacingAndGlyphs">C4</text><text transform="translate(737 294.500) rotate(-90)" textLength="16" lengthAdjust="spacingAndGlyphs">R1</text><text transform="translate(803 271.500) rotate(-90)" textLength="18" lengthAdjust="spacingAndGlyphs">R2</text><text transform="translate(663 375.500) rotate(-90)" textLength="16" lengthAdjust="spacingAndGlyphs">D1</text><text x="677" y="366" textLength="15" lengthAdjust="spacingAndGlyphs">Q1</text><text x="853" y="274" textLength="18" lengthAdjust="spacingAndGlyphs">R5</text><text x="793" y="308" textLength="18" lengthAdjust="spacingAndGlyphs">R3</text><text transform="translate(920 252) rotate(-90)" textLength="17" lengthAdjust="spacingAndGlyphs">Q3</text><text x="957" y="273" textLength="18" lengthAdjust="spacingAndGlyphs">C8</text><text x="873" y="310" textLength="17" lengthAdjust="spacingAndGlyphs">C5</text><text x="873" y="311" textLength="17" lengthAdjust="spacingAndGlyphs">C6</text><text x="909" y="319" textLength="17" lengthAdjust="spacingAndGlyphs">Q2</text><text transform="translate(953.500 350.500) rotate(-90)" textLength="18" lengthAdjust="spacingAndGlyphs">R4</text><text transform="translate(970.500 350.500) rotate(-90)" textLength="18" lengthAdjust="spacingAndGlyphs">R6</text><text x="918" y="402" textLength="17" lengthAdjust="spacingAndGlyphs">C7</text><text x="584" y="418" textLength="15" lengthAdjust="spacingAndGlyphs">C1</text><text x="615" y="490" textLength="17" lengthAdjust="spacingAndGlyphs">C3</text><text x="608" y="505" textLength="23" lengthAdjust="spacingAndGlyphs">RV1</text><text x="756" y="462" textLength="60" lengthAdjust="spacingAndGlyphs">30.48mm</text>
        </g>
        <g class="num">
          <text x="639.500 639.500" y="297 314">12</text><text x="698.500 715.500" y="319 319">12</text><text x="745.500 745.500" y="247 317">21</text><text x="768.500 838.500" y="317 317">12</text><text x="648.500 648.500" y="342 394">AK</text><text x="677.500 694.500 686.500" y="342 342 350">312</text><text x="808.500 808.500" y="228 297">21</text><text x="827.500 897.500" y="259 259">21</text><text x="873.500 890.500" y="293 293">21</text><text x="873.500 890.500" y="326 326">12</text><text x="958.500 975.500" y="287 287">12</text><text x="959.500 959.500" y="309 378">21</text><text x="976.500 976.500" y="309 378">21</text><text x="918.500 935.500" y="386 386">21</text><text x="584.500 602.500" y="431 431">12</text><text x="615.500 632.500" y="472 472">21</text><text x="604.500 639.500 621.500" y="544 544 578">123</text>
        </g>
        <g class="num big"><text x="678.500 704.500 678.500" y="237 264 290">321</text><text x="728.500" y="229">1</text><text x="604.500" y="353.500">1</text><text x="605.500" y="392">1</text><text x="631" y="432">1</text><text x="585.500" y="506">1</text><text x="896.700" y="564">1</text><text x="945.700" y="564">1</text></g>
      </svg>
    </section>
  </main>

  <footer class="status">
    <div class="seg s1"><div class="combo layer"><em></em><span>Top Copper</span><svg class="chev"><use href="#chev"/></svg></div></div>
    <div class="seg s2"><b><svg><use href="#glayers"/></svg></b><i></i><b class="on"><svg><use href="#gamp"/></svg></b><b class="on"><svg><use href="#gpads"/></svg></b><b class="on"><svg><use href="#gvia"/></svg></b><b class="on"><svg><use href="#gtrk"/></svg></b><b class="on"><svg><use href="#gdim"/></svg></b><b class="on"><svg><use href="#gzone"/></svg></b><b><svg><use href="#grats"/></svg></b><i></i><b><svg><use href="#gsel"/></svg></b></div>
    <div class="seg s3"><span class="path">C:\Users\Álvaro\Documents\2020\Reto 4\Amplificador Theremin.pdsprj</span></div>
    <div class="seg s4"><svg><use href="#tick"/></svg><span class="crc">No CRC errors</span></div>
    <div class="seg s5"><svg><use href="#tick"/></svg><span class="drc">No DRC errors</span></div>
    <div class="seg s6"><span class="cx1">-90.000</span><span class="cy1">+27.500</span><span class="mm">mm</span></div>
  </footer>

  <div class="taskbar">
    <div class="tb"><svg viewBox="0 0 16 16"><path d="M0 2.300L7 1.300v6.200H0zM7.600 1.200L16 0v7.500H7.600zM0 8.200h7v6.300l-7-1zM7.600 8.200H16V16l-8.400-1.200z" fill="#fff"/></svg></div>
    <div class="tb"><svg viewBox="0 0 16 16"><circle cx="10" cy="5.800" r="4.800" fill="none" stroke="#fff" stroke-width="1.300"/><path d="M6.500 9.500L.5 15.500" stroke="#fff" stroke-width="1.500"/></svg></div>
    <div class="tb"><svg viewBox="0 0 16 16"><circle cx="8" cy="8" r="6.500" fill="none" stroke="#fff" stroke-width="2.200"/></svg></div>
    <div class="tb wide"><svg viewBox="0 0 16 16"><path d="M.7 0v3H11V0M.7 16v-3H11v3M.7 5h10.300v6H.7zM14.300 0v3M14.300 8v8" fill="none" stroke="#fff" stroke-width="1.200"/><path d="M13 4h2.600v3H13z" fill="#fff"/></svg></div>
    <div class="tb37"><svg viewBox="0 0 16 16"><path d="M4.500 4q0-3.500 3.500-3.500T11.500 4" fill="none" stroke="#ddd"/><path d="M.5 3.500h15V15q0 1-1 1h-13q-1 0-1-1z" fill="#f4f4f4"/><path d="M4.500 6H7.500v3H4.500z" fill="#e04a22"/><path d="M8.500 6h3v3h-3z" fill="#6ba829"/><path d="M4.500 10h3v3h-3z" fill="#1b8fd0"/><path d="M8.500 10h3v3h-3z" fill="#e8b01c"/></svg></div>
    <div class="tb37"><svg viewBox="0 0 16 16"><path d="M.5 7.500Q2 .2 8.300.2q7 .3 7.200 7.300v1.700H5.500q.3 3.500 4.200 3.600 2.500 0 4.800-1.200v3.200q-2.500 1.200-5.500 1.200-6.500-.2-6.800-6.200 0-3.500 3.200-5.300Q3 4.500.5 7.500zM5.600 6.500h5.200Q10.500 4 8.400 4 6.200 4 5.600 6.500z" fill="#1783d8" fill-rule="evenodd"/></svg></div>
    <div class="tb37 run"><svg viewBox="0 0 16 16"><circle cx="8" cy="8" r="7.700" fill="#e5483b"/><path d="M1.300 4.200L5 10.500 8 15.700A7.700 7.700 0 0 1 1.300 4.200z" fill="#2da557"/><path d="M8 15.700l3.500-6.200L10 4.600h4.900A7.700 7.700 0 0 1 8 15.700z" fill="#f6ca32"/><circle cx="8" cy="8" r="3.700" fill="#fff"/><circle cx="8" cy="8" r="2.900" fill="#4384ee"/></svg></div>
    <div class="tb37"><svg viewBox="0 0 16 16"><path d="M0 1h6l1.500 2H16v11.500H0z" fill="#f4c34e"/><path d="M0 5h16v9.500H0z" fill="#fbdd83"/><path d="M3 9h10v6.500h-2.500V12h-5v3.500H3z" fill="#3d93cf"/></svg></div>
    <div class="tb37"><svg viewBox="0 0 16 16"><path d="M0 5l8-4.500L16 5v9.500H0z" fill="#fff"/><path d="M1.500 5h13L8 9.500l-3-1.500" fill="#1e1e1e"/></svg></div>
    <div class="tb37"><svg viewBox="0 0 16 16"><path d="M0 0h16v16H0z" fill="#000"/><path d="M5 2.500h2l2.200 6.500V2.500h2v11H9.300L7 7v6.500H5z" fill="#d81f26"/></svg></div>
    <div class="tb37"><svg viewBox="0 0 16 16"><circle cx="8" cy="8" r="7.900" fill="#1fce5e"/><path d="M3 5.500q5.500-1.800 10 .7M3.500 8.300q4.800-1.500 8.700.7M4 11q4-1.200 7.200.6" fill="none" stroke="#15351f" stroke-width="1.500" stroke-linecap="round"/></svg></div>
    <div class="tb37 act"><svg><use href="#proteus"/></svg></div>
    <div class="tray">
      <svg class="tr1" viewBox="0 0 12 7"><path d="M.7 6.300L6 1l5.300 5.300" fill="none" stroke="#fff" stroke-width="1.300"/></svg>
      <svg class="tr2" viewBox="0 0 14 14"><path d="M1 12.500Q2 3 12.500 1.500M4 12.500Q5 6 12.500 4.500M7 12.500Q8 9 12.500 7.500" fill="none" stroke="#ccc" stroke-width="1.200"/><circle cx="11" cy="11.500" r="1.700" fill="#fff"/></svg>
      <svg class="tr3" viewBox="0 0 15 12"><path d="M.6 4h2.500L6 1v10L3.100 8H.6z" fill="none" stroke="#fff" stroke-width="1.100"/><path d="M9 3.500l5 5M14 3.500l-5 5" stroke="#fff" stroke-width="1.100"/></svg>
      <svg class="tr4" viewBox="0 0 16 12"><path d="M.5 3h4v2.500Q2.500 7.500.5 5.500zM1.500 0v3M3.500 0v3M2.500 7v4H6" fill="none" stroke="#fff"/><path d="M6 3.500h8.500v7H5M15.500 5.500v3" fill="none" stroke="#fff"/><path d="M6 5h7v4H6z" fill="#fff"/></svg>
      <span class="clock">8:50</span>
      <svg class="tr5" viewBox="0 0 16 16"><path d="M.6.600h14.800v11.800H10.500L8 15l-2.500-2.600H.6z" fill="none" stroke="#fff" stroke-width="1.200"/></svg>
    </div>
  </div>
</div>
</body>
</html>
```
FILE: styles.css
```css
* { box-sizing: border-box; }
body { margin: 0; background: #fff; font: 12px "Liberation Sans", Arial, sans-serif; color: #111; }
.defs { position: absolute; }
.app { width: 1366px; height: 768px; display: flex; flex-direction: column; background: #e4ecf2; overflow: hidden; }
b { display: flex; align-items: center; justify-content: center; width: 22px; height: 21px; flex: none; border: 1px solid transparent; }
b svg, .seg > svg { width: 16px; height: 16px; flex: none; overflow: visible; }
b.on { background: linear-gradient(#cfe0ec, #bedbee); border-color: #6f9dbb; }
.fliph { transform: scaleX(-1); }
.turn { transform: rotate(-90deg); }
span { white-space: nowrap; }

.title { height: 23px; flex: none; background: #00b7c3; display: flex; align-items: center; padding-left: 3px; }
.i14 { width: 14px; height: 14px; }
.title-text { font: 12px "Noto Sans", sans-serif; width: 322px; margin: 0 auto 0 6px; color: #062a30; letter-spacing: -.35px; }
.wc { width: 46px; height: 23px; }
.menu { height: 18px; flex: none; background: #fff; display: flex; align-items: center; font: 12px/18px "Noto Sans", sans-serif; letter-spacing: -.3px; padding-left: 7px; color: #111; }
.m1 { width: 32px; } .m2 { width: 52px; } .m3 { width: 39px; } .m4 { width: 34px; } .m5 { width: 50px; } .m6 { width: 41px; } .m7 { width: 75px; } .m8 { width: 52px; }

.bars { height: 32px; flex: none; display: flex; align-items: flex-start; background: linear-gradient(90deg, #dfe8ef, #e9f2f9); }
.bar { height: 28px; display: flex; align-items: center; flex: none; background: linear-gradient(#ebf2f7, #d8e9f4 50%, #b7d6e9); border-right: 1px solid #a6c3d6; padding-left: 10px; position: relative; }
.bar::before, .seg::before { content: ""; position: absolute; left: 4px; top: 3px; bottom: 1px; width: 2px; background: repeating-linear-gradient(#9db6c7 0 2px, #f5fafd 2px 4px); }
.bar i { width: 8px; height: 17px; background: linear-gradient(90deg, transparent 3px, #98a4ac 3px 4px, #fff 4px 5px, transparent 5px); }
.b1 { width: 338px; }
.b2 { width: 112px; margin-left: 5px; }
.b3 { width: 294px; margin-left: 4px; padding-left: 10px; }
.b4 { width: 228px; margin-left: 47px; padding-left: 11px; }
.b5 { width: 192px; margin-left: 4px; padding-left: 11px; }
.combo { display: flex; align-items: center; height: 21px; border: 1px solid #7a7f83; }
.chev { width: 9px; height: 6px; margin-left: auto; color: #333; }
.design { width: 97px; background: #e3e3e3; padding: 0 4px 0 3px; letter-spacing: -.45px; }

.tabs { height: 31px; flex: none; display: flex; background: linear-gradient(#e4ecf2 24px, #6f9dbb 24px 25px, #c3dff0 25px, #abcfe4); }
.tab { position: relative; height: 25px; display: flex; align-items: center; flex: none; }
.tab > * { position: relative; flex: none; }
.tab .shape { position: absolute; left: 0; top: 0; width: 100%; height: 25px; }
.tab span { letter-spacing: -.72px; color: #222; }
.cx { width: 11px; height: 11px; color: #686868; margin-left: auto; overflow: visible; }
.t1 { width: 162px; padding: 0 12px 0 21px; }
.t1 span { margin-left: 4px; }
.i14b { width: 14px; height: 15px; }
.i16 { width: 16px; height: 16px; }
.t2 { width: 140px; padding: 0 12px 0 22px; margin-left: -264px; }
.t2 span { font-weight: bold; color: #1c4a6e; margin-left: 3px; letter-spacing: -.35px; }
.t3 { width: 124px; padding: 0 12px 0 12px; margin-left: 129px; }
.t3 span { margin-left: 2px; }

.work { height: 606px; flex: none; display: flex; background: #e2eaf0; }
.modes { width: 28px; height: 546px; background: linear-gradient(90deg, #e3f0f8, #d5e9f5 50%, #b4d6e9); padding: 10px 0 0 2px; position: relative; border-bottom: 1px solid #a6c3d6; }
.modes::before, .orient::before { content: ""; position: absolute; left: 1px; right: 1px; top: 4px; height: 2px; background: repeating-linear-gradient(90deg, #9db6c7 0 2px, #f5fafd 2px 4px); }
.modes i, .orient i { display: block; height: 4px; margin: 0 2px; background: linear-gradient(transparent 1px, #8e9ba3 1px 2px, #fff 2px 3px, transparent 3px); }
.orient { width: 28px; height: 124px; margin-left: 1px; padding: 10px 0 0 3px; background: linear-gradient(90deg, #e3f0f8, #d5e9f5 50%, #c2deee); position: relative; border-bottom: 1px solid #a6c3d6; }
.orient .angle { display: block; width: 23px; height: 15px; margin: 3px 0 4px 1px; background: #fff; line-height: 15px; letter-spacing: -.5px; }
.orient i + b { margin-top: 1px; }
.side { width: 122px; margin-left: 1px; display: flex; flex-direction: column; background: #d8e4ed; }
.overview { width: 122px; height: 101px; background: #000; border: 1px solid #6b6f72; flex: none; }
.selector { margin-top: 4px; height: 501px; border: 1px solid #686c70; border-right-width: 2px; background: #fff; }
.sel-head { height: 24px; display: flex; align-items: center; background: linear-gradient(#e6f1f8, #c0dcec); border-bottom: 1px solid #8a9095; padding-left: 3px; }
.tbadge { width: 15px; height: 15px; border-radius: 3px; background: #0b50dc; color: #fff; font-weight: bold; text-align: center; line-height: 15px; }
.sel-title { margin-left: 14px; letter-spacing: -.95px; }
ul { list-style: none; margin: 0; padding: 0 1px; }
li { height: 13px; line-height: 15px; padding-left: 2px; font-size: 12px; letter-spacing: -.7px; }
li.sel { background: #0078d7; color: #fff; }
.canvas { width: 1179px; height: 606px; margin-left: 3px; border: 1px solid #6b6f72; background: #000; }
.canvas svg { display: block; }
.grid-lines { fill: none; stroke: #444; shape-rendering: crispEdges; }
.thin path, .thick path { fill: none; stroke: #00008f; stroke-linejoin: round; stroke-linecap: round; stroke-width: 9.5px; }
.thick path { stroke-width: 15.5px; }
.thin, .thick { opacity: .94; }
.bottom-text { fill: none; stroke: #0000a0; stroke-width: 1; }
.bt { fill: #0000b0; stroke: none; font: 15px "Liberation Sans", sans-serif; }
.bt.wide { font-size: 16px; }
.dots-mag { fill: none; stroke: #b700b7; stroke-linecap: round; }
.dots-gray { fill: none; stroke: #868686; stroke-linecap: round; }
.silk { fill: none; stroke: #50eeee; stroke-width: 1; shape-rendering: crispEdges; }
.sq { stroke: #7fd8f4; }
.dot { stroke-width: 2; }
.ref { fill: #50eeee; font: 9.5px "Liberation Sans", sans-serif; }
.num { fill: #c9f3f3; font: bold 7px "Liberation Sans", sans-serif; text-anchor: middle; }
.big { font-size: 10px; }
.ic-dollar { font: 10px "Liberation Serif", serif; fill: #7a6a20; }
.ic-bom { font: bold 7px "Liberation Sans", sans-serif; fill: #5a52b0; }
.ic-help { font: bold 14px "Liberation Sans", sans-serif; fill: #fff; }
.ic-u { font: bold 6px "Liberation Sans", sans-serif; fill: #222; }
.ic-a { font: bold 18px "Liberation Serif", serif; fill: #2a2f33; }

.status { height: 28px; flex: none; display: flex; background: #dfeaf2; }
.seg { height: 28px; display: flex; align-items: center; flex: none; position: relative; background: linear-gradient(#e8f3fa, #d2e7f4 55%, #b3d3e6); border-right: 1px solid #a6c3d6; }
.seg i { width: 8px; height: 17px; background: linear-gradient(90deg, transparent 3px, #98a4ac 3px 4px, #fff 4px 5px, transparent 5px); }
.seg span { letter-spacing: -.53px; }
.s1 { width: 148px; padding-left: 11px; }
.layer { width: 132px; background: #fff; padding: 0 4px 0 3px; }
.seg .layer span { letter-spacing: -.75px; }
.layer em { width: 17px; height: 13px; background: #c00000; border: 1px solid #222; margin-right: 3px; }
.s2 { width: 227px; margin-left: 4px; padding-left: 11px; }
.s3 { width: 413px; margin-left: 4px; padding-left: 14px; }
.s4 { width: 262px; margin-left: 5px; padding-left: 14px; }
.s5 { width: 129px; margin-left: 5px; padding-left: 14px; }
.s6 { width: 165px; margin-left: 6px; padding-left: 36px; border: 0; }
.seg .crc, .seg .drc { letter-spacing: -.88px; }
.crc { margin-left: 84px; } .drc { margin-left: 17px; }
.cx1 { width: 60px; } .cy1 { width: 48px; }
.seg .mm { color: #1414a0; font-size: 11px; letter-spacing: -1px; }

.taskbar { height: 30px; flex: none; background: #1e1f1e; display: flex; align-items: stretch; }
.taskbar div { display: flex; align-items: center; justify-content: center; }
.tb { width: 36px; } .tb.wide { width: 38px; }
.tb37 { width: 37px; }
.tb svg, .tb37 svg { width: 16px; height: 16px; }
.run { background: linear-gradient(90deg, #7fd8dd, #7fd8dd) center bottom / 28px 2px no-repeat; }
.act { background: linear-gradient(#7fd8dd, #7fd8dd) center bottom / 100% 2px no-repeat #4c4e4d; }
.tray { margin-left: auto; width: 182px; border-right: 1px solid #777; margin-right: 4px; }
.taskbar .tray { justify-content: flex-start; }
.tr1 { width: 12px; height: 7px; margin-left: 4px; }
.tr2 { width: 13px; height: 13px; margin-left: 13px; }
.tr3 { width: 15px; height: 12px; margin-left: 8px; }
.tr4 { width: 16px; height: 12px; margin-left: 9px; }
.clock { color: #fff; font: 12px "Noto Sans", sans-serif; letter-spacing: -.9px; width: 22px; margin-left: 13px; }
.tr5 { width: 16px; height: 16px; margin-left: 20px; }
```
